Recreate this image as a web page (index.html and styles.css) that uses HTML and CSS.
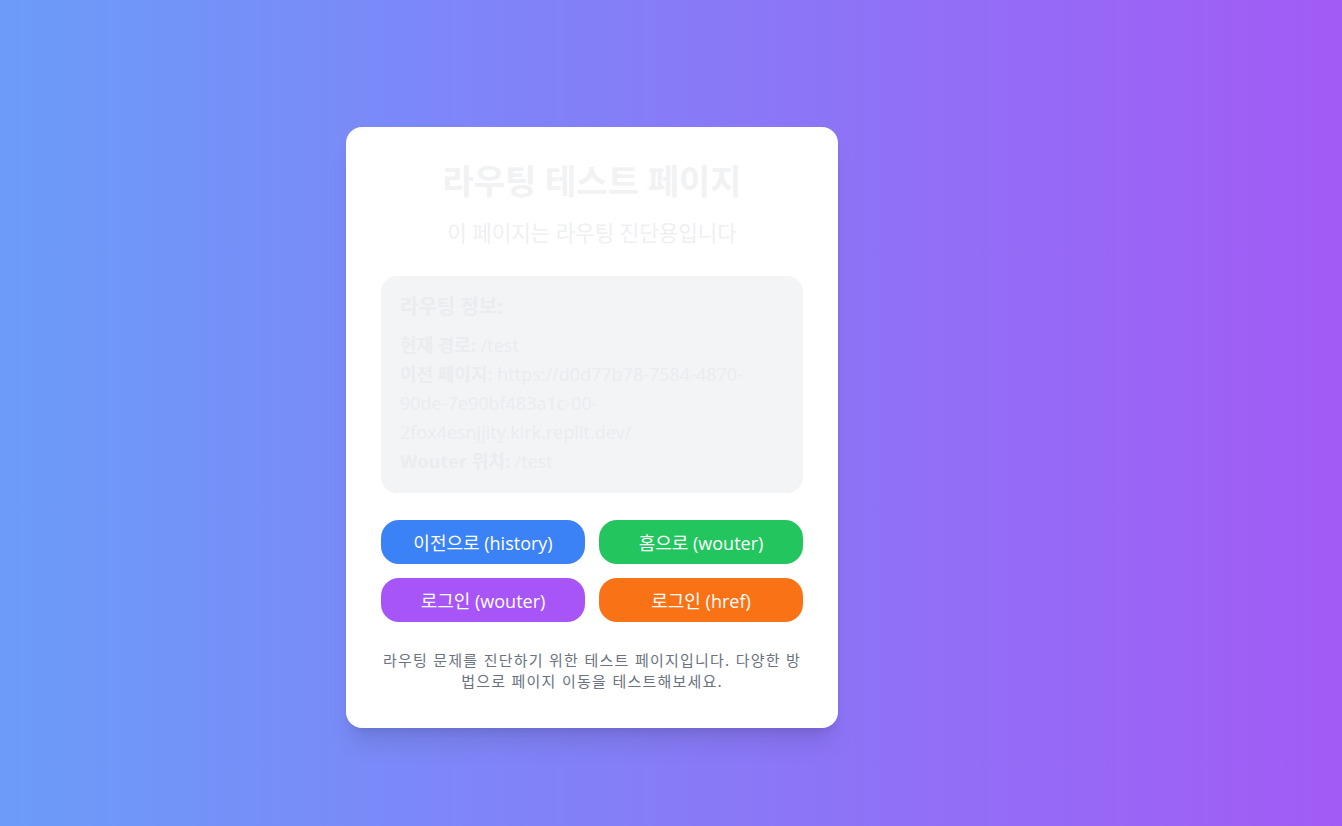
FILE: index.html
```html
<!DOCTYPE html>
<html lang="ko">
<head>
<meta charset="utf-8">
<title>라우팅 테스트 페이지</title>
<link rel="stylesheet" href="styles.css">
</head>
<body>
<main class="page">
  <section class="card">
    <h1 class="title">라우팅 테스트 페이지</h1>
    <p class="subtitle">이 페이지는 라우팅 진단용입니다</p>
    <div class="info">
      <h2 class="info-title">라우팅 정보:</h2>
      <p class="info-line"><strong>현재 경로:</strong> /test</p>
      <p class="info-line"><strong>이전 페이지:</strong> https://d0d77b78-7584-4870-90de-7e90bf483a1c-00-2fox4esnjjity.kirk.replit.dev/</p>
      <p class="info-line"><strong>Wouter 위치:</strong> /test</p>
    </div>
    <div class="buttons">
      <button class="btn btn-blue">이전으로 (history)</button>
      <button class="btn btn-green">홈으로 (wouter)</button>
      <button class="btn btn-purple">로그인 (wouter)</button>
      <button class="btn btn-orange">로그인 (href)</button>
    </div>
    <p class="note">라우팅 문제를 진단하기 위한 테스트 페이지입니다. 다양한 방법으로 페이지 이동을 테스트해보세요.</p>
  </section>
</main>
</body>
</html>
```

FILE: styles.css
```css
* { box-sizing: border-box; }
html, body { margin: 0; padding: 0; }
body {
  font-family: "Open Sans", "Noto Sans CJK KR", sans-serif;
  background: linear-gradient(to right, #6b9cf9, #a25bf5);
  min-height: 826px;
}
.page {
  width: 1184px;
  min-height: 826px;
  padding-top: 127px;
  display: flex;
  align-items: flex-start;
  justify-content: center;
}
.card {
  width: 492px;
  background: #fff;
  border-radius: 16px;
  padding: 32px 35px 37px;
  box-shadow: 0 20px 25px -5px rgba(0,0,0,0.1), 0 8px 10px -6px rgba(0,0,0,0.1);
}
.title {
  margin: 0;
  text-align: center;
  font-size: 34px;
  font-weight: 700;
  line-height: 44px;
  color: #f1f2f4;
}
.subtitle {
  margin: 16px 0 0;
  text-align: center;
  font-size: 21.2px;
  line-height: 28px;
  color: #eef0f2;
}
.info {
  margin-top: 29px;
  background: #f3f4f6;
  border-radius: 16px;
  padding: 17px 19px 17px;
  color: #eaecef;
}
.info-title {
  margin: 0 0 10px;
  font-size: 20px;
  font-weight: 700;
  line-height: 28px;
}
.info-line {
  margin: 0;
  font-size: 18px;
  line-height: 29px;
  overflow-wrap: anywhere;
}
.info-line strong { font-weight: 700; }
.buttons {
  margin-top: 27px;
  display: grid;
  grid-template-columns: 1fr 1fr;
  gap: 14px;
}
.btn {
  height: 44px;
  border: none;
  border-radius: 18px;
  color: #fff;
  font-family: inherit;
  font-size: 18px;
  padding: 0;
}
.btn-blue { background: #3b82f6; }
.btn-green { background: #22c55e; }
.btn-purple { background: #a855f7; }
.btn-orange { background: #f97316; }
.note {
  margin: 27px 0 0;
  text-align: center;
  font-family: "Noto Sans CJK JP", sans-serif;
  font-size: 15px;
  line-height: 21px;
  letter-spacing: 1.2px;
  color: #6b7280;
}
```
